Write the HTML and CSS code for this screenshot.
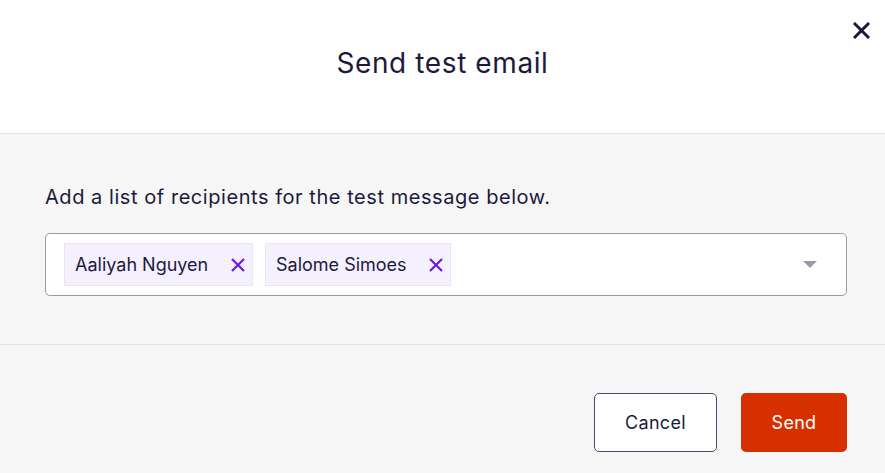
FILE: index.html
```html
<!DOCTYPE html>
<html>
<head>
<meta charset="utf-8">
<link rel="stylesheet" href="styles.css">
</head>
<body>
<div class="modal">
  <header class="modal-header">
    <h1 class="title">Send test email</h1>
    <button class="close" aria-label="Close">
      <svg width="17" height="17" viewBox="0 0 17 17"><path d="M2 2 L15 15 M15 2 L2 15" stroke="#1c1a3c" stroke-width="3" stroke-linecap="square" fill="none"/></svg>
    </button>
  </header>
  <section class="modal-body">
    <p class="label">Add a list of recipients for the test message below.</p>
    <div class="select">
      <div class="chips">
        <span class="chip">Aaliyah Nguyen
          <svg class="chip-x" width="14" height="14" viewBox="0 0 14 14"><path d="M1 1 L13 13 M13 1 L1 13" stroke="#6a1be0" stroke-width="2.2" fill="none"/></svg>
        </span>
        <span class="chip">Salome Simoes
          <svg class="chip-x" width="14" height="14" viewBox="0 0 14 14"><path d="M1 1 L13 13 M13 1 L1 13" stroke="#6a1be0" stroke-width="2.2" fill="none"/></svg>
        </span>
      </div>
      <svg class="caret" width="14" height="8" viewBox="0 0 14 8"><path d="M0 0 H14 L7 7 Z" fill="#9b98a8"/></svg>
    </div>
  </section>
  <footer class="modal-footer">
    <button class="btn btn-secondary">Cancel</button>
    <button class="btn btn-primary">Send</button>
  </footer>
</div>
</body>
</html>
```
FILE: styles.css
```css
* { box-sizing: border-box; }
html, body { margin: 0; padding: 0; }
body {
  font-family: Inter, "Noto Sans", sans-serif;
  color: #1c1a3c;
  background: #f6f6f6;
  width: 885px;
  height: 473px;
  overflow: hidden;
}
.modal { display: flex; flex-direction: column; height: 473px; }
.modal-header {
  position: relative;
  height: 134px;
  background: #fff;
  border-bottom: 1px solid #e3e3e6;
  display: flex;
  align-items: center;
  justify-content: center;
  padding-bottom: 7px;
}
.title {
  margin: 0;
  font-size: 28px;
  line-height: 34px;
  font-weight: 400;
  letter-spacing: 0.6px;
}
.close {
  position: absolute;
  top: 22px;
  right: 15px;
  width: 17px;
  height: 17px;
  padding: 0;
  border: 0;
  background: none;
  display: block;
}
.close svg { display: block; }
.modal-body {
  height: 211px;
  padding: 50px 38px 0 45px;
  border-bottom: 1px solid #e3e3e6;
}
.label {
  margin: 0 0 23px;
  font-size: 20px;
  line-height: 26px;
  letter-spacing: 0.55px;
}
.select {
  height: 63px;
  background: #fff;
  border: 1px solid #9b98a8;
  border-radius: 5px;
  display: flex;
  align-items: center;
  padding: 0 29px 0 18px;
}
.chips { display: flex; gap: 12px; flex: 1; }
.chip {
  display: flex;
  align-items: center;
  justify-content: space-between;
  height: 43px;
  padding: 0 7px 0 10px;
  background: #f5f0fd;
  border: 1px solid #ebe3fb;
  font-size: 18px;
  letter-spacing: 0;
  gap: 16px;
}
.chip:first-child { width: 189px; }
.chip:nth-child(2) { width: 186px; }
.chip-x { display: block; }
.caret { display: block; }
.modal-footer {
  flex: 1;
  display: flex;
  justify-content: flex-end;
  align-items: flex-start;
  gap: 24px;
  padding: 48px 38px 0 0;
}
.btn {
  height: 59px;
  border-radius: 5px;
  font-family: inherit;
  font-size: 18px;
  letter-spacing: 0.3px;
  cursor: pointer;
}
.btn-secondary {
  width: 123px;
  background: #fff;
  border: 1px solid #4c4a66;
  color: #1c1a3c;
}
.btn-primary {
  width: 106px;
  background: #d63000;
  border: 0;
  color: #fff;
}
```
